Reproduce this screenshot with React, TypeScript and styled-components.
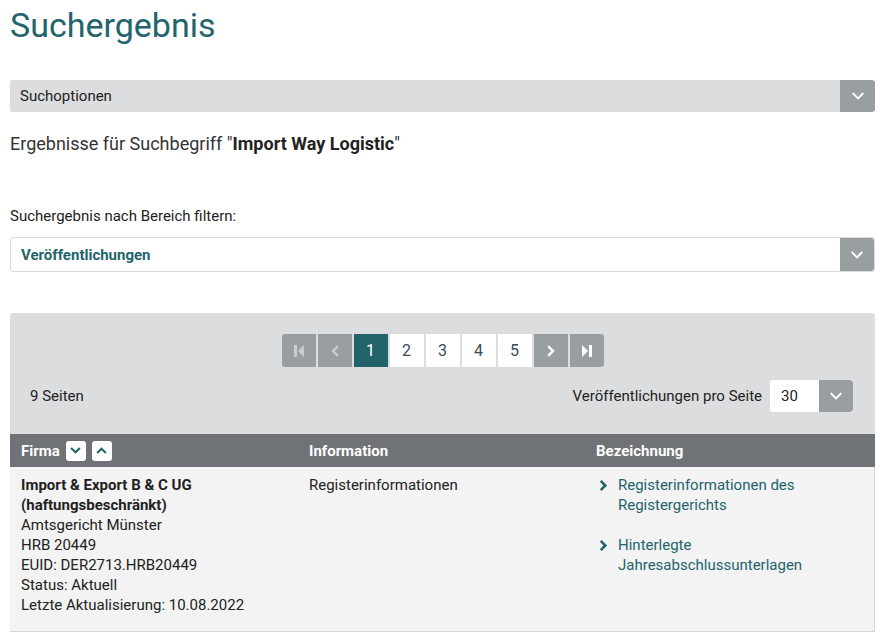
import React from "react";
import styled, { createGlobalStyle } from "styled-components";

const Global = createGlobalStyle`
  html, body { margin: 0; padding: 0; background: #fff; }
  body { font-family: Roboto, "Liberation Sans", Arial, sans-serif; color: #222; }
  * { box-sizing: border-box; }
`;

const Page = styled.div`
  padding: 5px 13px 0 10px;
  display: flex;
  flex-direction: column;
`;

const Title = styled.h1`
  margin: 0;
  font-size: 34px;
  line-height: 40px;
  font-weight: 400;
  color: #23646c;
`;

const Bar = styled.div`
  margin-top: 35px;
  height: 32px;
  background: #dcdddf;
  border-radius: 3px;
  display: flex;
  align-items: center;
  justify-content: space-between;
  overflow: hidden;
  font-size: 15px;
  color: #222;
`;

const BarLabel = styled.span`
  padding-left: 10px;
`;

const DropBtn = styled.div<{ $w?: number }>`
  width: ${(p) => p.$w ?? 35}px;
  align-self: stretch;
  background: #999ea1;
  display: flex;
  align-items: center;
  justify-content: center;
  border-radius: 0 3px 3px 0;
`;

const Query = styled.p`
  margin: 20px 0 0;
  font-size: 18px;
  line-height: 24px;
  color: #333;
  b { color: #222; font-weight: 700; }
`;

const FilterLabel = styled.div`
  margin-top: 50px;
  font-size: 15px;
  line-height: 20px;
  color: #222;
`;

const Select = styled.div`
  margin-top: 11px;
  height: 35px;
  border: 1px solid #dadbdd;
  border-radius: 3px;
  display: flex;
  align-items: stretch;
  justify-content: space-between;
  background: #fff;
`;

const SelectValue = styled.span`
  padding-left: 10px;
  display: flex;
  align-items: center;
  font-size: 15px;
  font-weight: 700;
  color: #23646c;
`;

const Panel = styled.section`
  margin-top: 41px;
  background: #dcdddf;
  border-radius: 3px 3px 0 0;
  padding-top: 21px;
  display: flex;
  flex-direction: column;
`;

const Pager = styled.div`
  align-self: center;
  display: flex;
  gap: 2px;
  border-radius: 3px;
  overflow: hidden;
`;

const PageBtn = styled.div<{ $kind: "nav" | "navOff" | "active" | "page" }>`
  width: 34px;
  height: 33px;
  display: flex;
  align-items: center;
  justify-content: center;
  font-size: 16px;
  background: ${(p) =>
    p.$kind === "active" ? "#22636a" : p.$kind === "page" ? "#fff" : "#999ea1"};
  color: ${(p) =>
    p.$kind === "active" ? "#fff" : p.$kind === "page" ? "#3a4a5a" : p.$kind === "navOff" ? "#c9cbcd" : "#fff"};
`;

const MetaRow = styled.div`
  margin-top: 13px;
  padding: 0 22px 0 20px;
  display: flex;
  align-items: center;
  justify-content: space-between;
  font-size: 15px;
  color: #222;
`;

const PerPage = styled.div`
  display: flex;
  align-items: center;
  gap: 8px;
`;

const SmallSelect = styled.div`
  width: 83px;
  height: 32px;
  background: #fff;
  border-radius: 3px;
  display: flex;
  justify-content: space-between;
  overflow: hidden;
`;

const SmallValue = styled.span`
  padding-left: 11px;
  display: flex;
  align-items: center;
  font-size: 15px;
`;

const Table = styled.div`
  margin-top: 22px;
  display: flex;
  flex-direction: column;
`;

const Cols = styled.div<{ $head?: boolean }>`
  display: grid;
  grid-template-columns: 288px 287px 1fr;
  background: ${(p) => (p.$head ? "#6f7276" : "#f3f3f3")};
  color: ${(p) => (p.$head ? "#fff" : "#222")};
  font-size: 15px;
  ${(p) =>
    p.$head
      ? "height: 33px; align-items: center; font-weight: 700;"
      : "padding: 8px 0 16px; line-height: 20px; border-bottom: 1px solid #d8d8d8; border-right: 1px solid #d8d8d8;"}
`;

const Cell = styled.div`
  padding: 0 11px;
  display: flex;
  flex-direction: column;
`;

const HeadCell = styled.div`
  padding: 0 11px;
  display: flex;
  align-items: center;
  gap: 6px;
`;

const SortBtn = styled.span`
  width: 20px;
  height: 20px;
  border-radius: 3px;
  background: #fff;
  display: inline-flex;
  align-items: center;
  justify-content: center;
`;

const FirmName = styled.span`
  font-weight: 700;
`;

const LinkItem = styled.a`
  display: flex;
  gap: 9px;
  color: #23646c;
  text-decoration: none;
  margin-bottom: 20px;
  svg { flex: none; margin-top: 5px; margin-left: 2px; }
`;

const Chevron = ({ dir, color, size = 12, sw = 2 }: { dir: "down" | "up" | "left" | "right"; color: string; size?: number; sw?: number }) => {
  const pts =
    dir === "down" ? "2,4 6,8 10,4" : dir === "up" ? "2,8 6,4 10,8" : dir === "left" ? "8,2 4,6 8,10" : "4,2 8,6 4,10";
  return (
    <svg width={size} height={size} viewBox="0 0 12 12">
      <polyline points={pts} fill="none" stroke={color} strokeWidth={sw} strokeLinecap="square" strokeLinejoin="miter" />
    </svg>
  );
};

const First = ({ color }: { color: string }) => (
  <svg width="12" height="14" viewBox="0 0 12 14">
    <rect x="1" y="1" width="3" height="12" fill={color} />
    <polygon points="11,1 11,13 5,7" fill={color} />
  </svg>
);
const Last = ({ color }: { color: string }) => (
  <svg width="12" height="14" viewBox="0 0 12 14">
    <polygon points="1,1 1,13 7,7" fill={color} />
    <rect x="8" y="1" width="3" height="12" fill={color} />
  </svg>
);

export default function App() {
  return (
    <>
      <Global />
      <Page>
        <Title>Suchergebnis</Title>
        <Bar>
          <BarLabel>Suchoptionen</BarLabel>
          <DropBtn>
            <Chevron dir="down" color="#fff" size={14} sw={1.6} />
          </DropBtn>
        </Bar>
        <Query>
          Ergebnisse für Suchbegriff "<b>Import Way Logistic</b>"
        </Query>
        <FilterLabel>Suchergebnis nach Bereich filtern:</FilterLabel>
        <Select>
          <SelectValue>Veröffentlichungen</SelectValue>
          <DropBtn $w={34}>
            <Chevron dir="down" color="#fff" size={14} sw={1.6} />
          </DropBtn>
        </Select>
        <Panel>
          <Pager>
            <PageBtn $kind="navOff">
              <First color="#c9cbcd" />
            </PageBtn>
            <PageBtn $kind="navOff">
              <Chevron dir="left" color="#c9cbcd" size={12} sw={2.4} />
            </PageBtn>
            <PageBtn $kind="active">1</PageBtn>
            <PageBtn $kind="page">2</PageBtn>
            <PageBtn $kind="page">3</PageBtn>
            <PageBtn $kind="page">4</PageBtn>
            <PageBtn $kind="page">5</PageBtn>
            <PageBtn $kind="nav">
              <Chevron dir="right" color="#fff" size={12} sw={2.4} />
            </PageBtn>
            <PageBtn $kind="nav">
              <Last color="#fff" />
            </PageBtn>
          </Pager>
          <MetaRow>
            <span>9 Seiten</span>
            <PerPage>
              <span>Veröffentlichungen pro Seite</span>
              <SmallSelect>
                <SmallValue>30</SmallValue>
                <DropBtn $w={34}>
                  <Chevron dir="down" color="#fff" size={14} sw={1.6} />
                </DropBtn>
              </SmallSelect>
            </PerPage>
          </MetaRow>
          <Table>
            <Cols $head>
              <HeadCell>
                Firma
                <SortBtn>
                  <Chevron dir="down" color="#23646c" size={11} sw={2.2} />
                </SortBtn>
                <SortBtn>
                  <Chevron dir="up" color="#23646c" size={11} sw={2.2} />
                </SortBtn>
              </HeadCell>
              <HeadCell>Information</HeadCell>
              <HeadCell>Bezeichnung</HeadCell>
            </Cols>
            <Cols>
              <Cell>
                <FirmName>Import &amp; Export B &amp; C UG</FirmName>
                <FirmName>(haftungsbeschränkt)</FirmName>
                <span>Amtsgericht Münster</span>
                <span>HRB 20449</span>
                <span>EUID: DER2713.HRB20449</span>
                <span>Status: Aktuell</span>
                <span>Letzte Aktualisierung: 10.08.2022</span>
              </Cell>
              <Cell>
                <span>Registerinformationen</span>
              </Cell>
              <Cell>
                <LinkItem href="#">
                  <Chevron dir="right" color="#23646c" size={11} sw={2.8} />
                  <span>
                    Registerinformationen des
                    <br />
                    Registergerichts
                  </span>
                </LinkItem>
                <LinkItem href="#">
                  <Chevron dir="right" color="#23646c" size={11} sw={2.8} />
                  <span>
                    Hinterlegte
                    <br />
                    Jahresabschlussunterlagen
                  </span>
                </LinkItem>
              </Cell>
            </Cols>
          </Table>
        </Panel>
      </Page>
    </>
  );
}
